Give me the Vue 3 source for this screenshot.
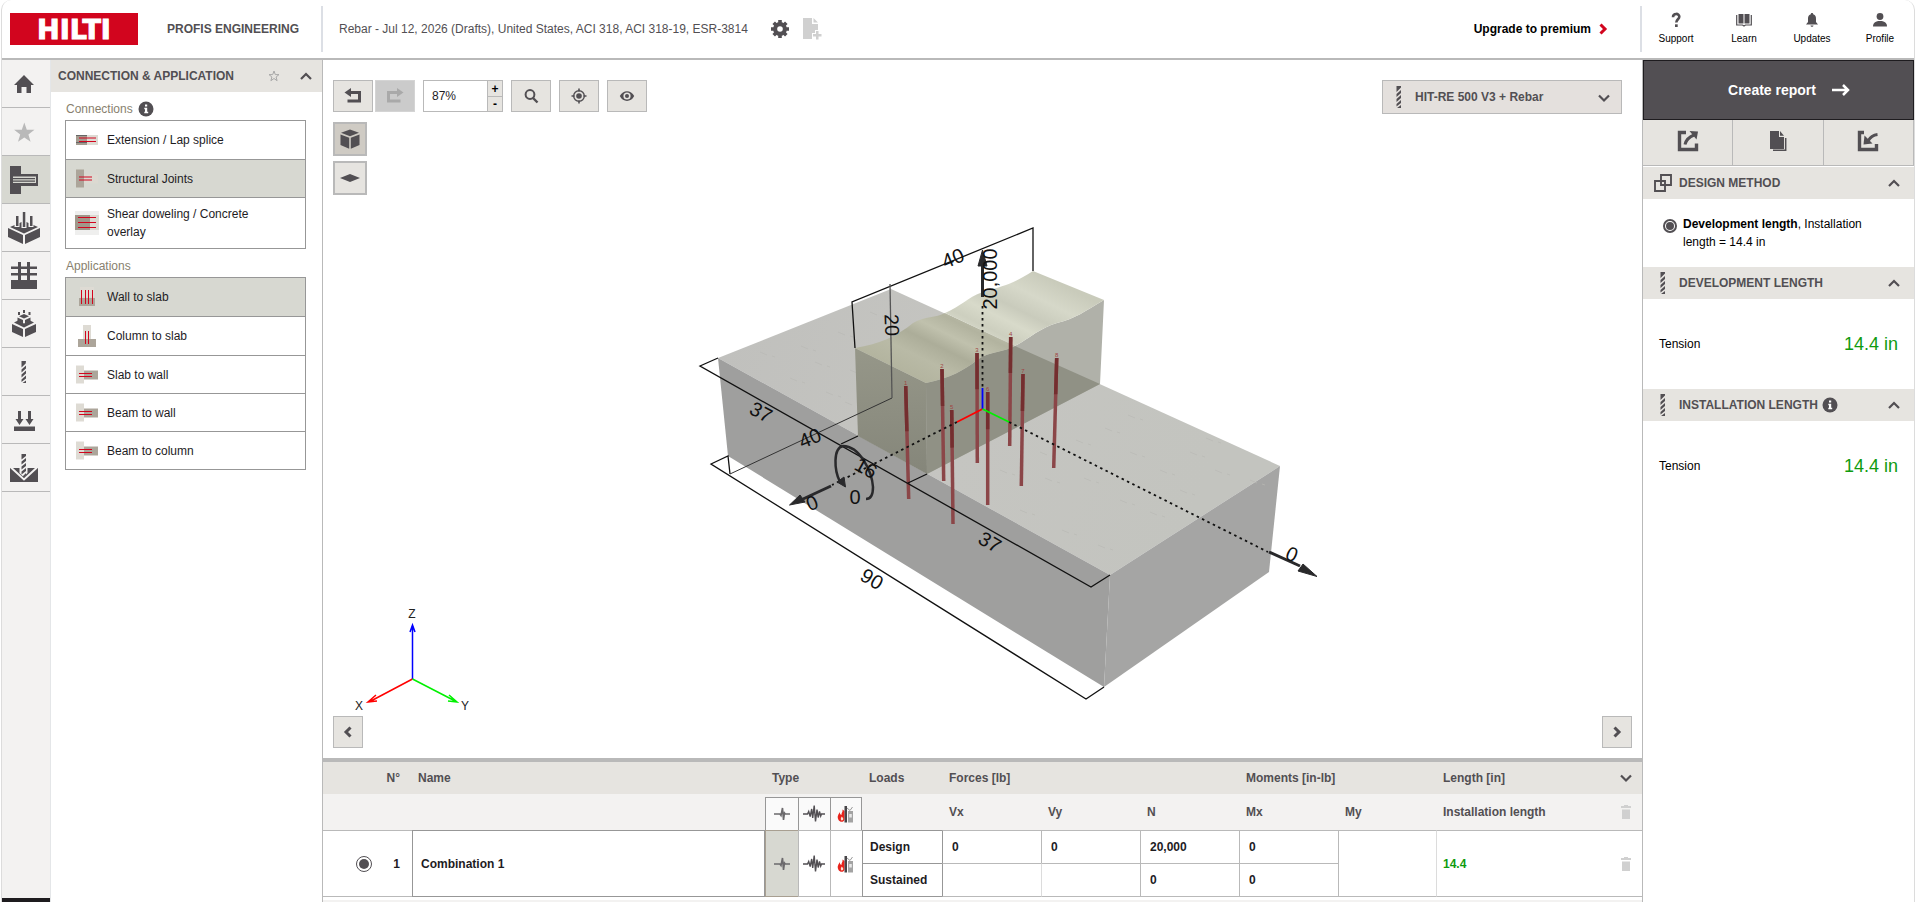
<script setup>
import { h, ref } from 'vue'

const glyphs = {
  home: '<path d="M22 15l10 10h-3v8h-4.500v-6h-5v6H15v-8h-3z"/>',
  star: '<path fill="#b9b9b9" d="M22.300 14.500l2.500 7.200h7.700l-6.100 4.700 2.200 7.400-6.300-4.400-6.300 4.400 2.200-7.400-6.100-4.700h7.700z"/>',
  joint: '<path d="M8 10h11v8h17v12H19v8H8z"/><path fill="#d7d8d1" d="M11 20.500h23v6.500H11z"/><path d="M11 22h22v1.200H11zM11 24.500h22v1.200H11z"/>',
  slab: '<path d="M6 24l15 7v9L6 33zM38 24l-15 7v9l15-7z"/><path d="M22 17l14 6-14 6.500L8 23z"/><g fill="#f3f2f1"><path d="M12.500 11h5v12h-5zM19.500 8h5v16h-5zM26.500 11h5v12h-5z"/></g><path d="M14 12h2.500v10H14zM20.800 8h2.500v15h-2.500zM28 12h2.500v10H28z"/>',
  mesh: '<path d="M9 28h26v9H9zM16 10h3v18h-3zM25 10h3v18h-3zM9 14.500h26v2.500H9zM9 21h26v2.500H9z"/>',
  stack: '<path d="M10 24l11 5v8l-11-5zM34 24l-11 5v8l11-5z"/><path d="M12 22.500l4-2 6 3 6-3 4 2-10 5z"/><path d="M15.500 17.500l5.500 2.500v3.500l-5.500-2.500zM28.500 17.500L23 20v3.500l5.500-2.500z"/><path d="M22 14l5 2.200-5 2.300-5-2.300z"/><path d="M16 12h2v3h-2zM21 10h2v3h-2zM26.500 12h2v3h-2z"/>',
  drill: '<path d="M19.500 13H24l-.3 2.500-4.200 4zM24 17.500v3l-4.500 4v-3zM24 22.500v3l-4.500 4v-3zM24 27.500v3L19.500 34v-2.500zM24 32.500V35h-3.500z"/>',
  loads: '<path d="M16 15h3v8h2.500l-4 6-4-6H16zM26 15h3v8h2.500l-4 6-4-6H26zM12 30.500h21V35H12z"/>',
  drillbox: '<path d="M8 24h28v14H8z"/><path d="M9 23.500l13 12 13-12" fill="none" stroke="#f3f2f1" stroke-width="2"/><path fill="#f3f2f1" d="M17.500 22h8v7l-4 4-4-4z"/><path d="M19.500 10H24v2l-4.500 3.500zM24 14v3l-4.500 3.500v-3zM24 19v3l-4.500 3.500v-3zM24 24v3l-4.500 3.500v-3zM24 29v2l-2 2.500-1.500-1z"/>'
}

const Icon = (props) =>
  h('svg', { viewBox: '0 0 48 47', width: 48, height: 47, fill: '#524f53', 'aria-hidden': 'true', innerHTML: glyphs[props.name] })
Icon.props = ['name']

const Bit = () =>
  h('svg', {
    viewBox: '0 0 6 22', width: 6, height: 22, fill: '#524f53', 'aria-hidden': 'true',
    innerHTML: '<path d="M.5 0H5v1.500L.5 6zM5 4v3L.5 11V8zM5 9v3L.5 16v-3zM5 14v3L.5 20.500V18zM5 19v3H1z"/>'
  })

const Chevron = (props) =>
  h('svg', {
    viewBox: '0 0 12 12', width: 12, height: 12, fill: 'none', stroke: props.color || '#524f53', 'stroke-width': props.thick || 2.2, 'aria-hidden': 'true',
    innerHTML: { up: '<path d="M1 9l5-5 5 5"/>', down: '<path d="M1 3.500l5 5 5-5"/>', left: '<path d="M8.500 1.500L4 6l4.500 4.500"/>', right: '<path d="M3.500 1.500L8 6l-4.500 4.500"/>' }[props.dir]
  })
Chevron.props = ['dir', 'color', 'thick']

const Info = () =>
  h('svg', {
    viewBox: '0 0 16 16', width: 16, height: 16, 'aria-hidden': 'true',
    innerHTML: '<circle cx="8" cy="8" r="7.500" fill="#524f53"/><path fill="#fff" d="M7 3.500h2.200v2H7zM6.300 6.800h2.900v4h1v1.400H6.300v-1.400H7V8.200h-.7z"/>'
  })

const Trash = () =>
  h('svg', { viewBox: '0 0 10 14', width: 10, height: 14, fill: '#d0d0d0', 'aria-hidden': 'true', innerHTML: '<path d="M0 1h3V0h4v1h3v2H0zM1 4.500h8V14H1z"/>' })

const waves = {
  single: '<path d="M3 12h6l1 1.500L11.500 6l1 12 1-7 .8 1H19" fill="none" stroke="#6b696c" stroke-width="1.600"/>',
  quake: '<path d="M0 12h4.500l1.200-2.500 1.500 5L8.700 7l1 9L11.200 3.500l1.300 16L14 7.500l1.200 8 1.300-6 1.200 4.500.8-2H22" fill="none" stroke="#524f53" stroke-width="1.400"/>',
  fire: '<path d="M7.500 7.500C8 10 6 11 6.500 13 5 12.500 4.800 11.500 5 10c-2.500 3-3 5.500-1.500 8C5 20.500 9 20.500 9.500 17.500V9z" fill="#e8231b"/><path d="M6.800 14.500c-1 1.200-1.500 3-.3 4 1.200 0 2-1 1.700-2.300z" fill="#fbe3d4"/><path d="M9.500 4H12v16.500H9.500z" fill="#484649"/><path d="M13 9h5v11.500h-5z" fill="#a3a3a3"/><path d="M14.200 12h2.600v3.500h-2.600z" fill="#e8e8e8"/><path d="M12 6l3 2.500L17.500 5" fill="none" stroke="#999"/>'
}
const Wave = (props) => h('svg', { viewBox: '0 0 22 24', width: 22, height: 24, 'aria-hidden': 'true', innerHTML: waves[props.kind] })
Wave.props = ['kind']

const thumbs = {
  lap: '<path fill="#dedbd4" d="M10 7h12v10H10z"/><path fill="#a49c90" d="M0 7h11v10H0z"/><path d="M0 7.500h11M0 14.500h11" stroke="#666"/><path d="M3 10h17M3 13.500h17" stroke="#d2051e"/>',
  joint: '<path fill="#dcd9d1" d="M8 7.500h14v9H8z"/><path fill="#aca59a" d="M0 2.500h8v18H0z"/><path d="M3 10h13M3 13h13" stroke="#d2051e"/>',
  shear: '<path fill="#efefee" d="M-1 0h24v24H-1z"/><path fill="#dcd9d1" d="M14 4h9v15h-9z"/><path fill="#a0978a" d="M-1 4h15v15H-1z"/><path d="M2 6.500h18M2 11.500h18M2 16.500h18" stroke="#d2051e"/>',
  wall: '<path fill="#dedbd4" d="M4 2h14v10H4z"/><path fill="#aca59a" d="M3 13h16v8H3z"/><path d="M5.500 5v14M9.500 5v14M12.500 5v14M16.500 5v14" stroke="#d2051e"/>',
  column: '<path fill="#dedbd4" d="M7 1h8v14H7z"/><path fill="#aca59a" d="M2 15h18v8H2z"/><path d="M9.500 7v13M12.500 7v13" stroke="#d2051e"/>',
  side: '<path fill="#dedbd4" d="M0 2.500h8v18H0z"/><path fill="#aca59a" d="M8 7.500h14v9H8z"/><path d="M3 10.500h13M3 13.500h13" stroke="#d2051e"/>'
}
const Thumb = (props) => h('svg', { viewBox: '0 0 22 24', width: 22, height: 24, overflow: 'visible', 'aria-hidden': 'true', innerHTML: thumbs[props.kind] })
Thumb.props = ['kind']

const nav = [
  ['home', 'Home'], ['star', 'Favourites'], ['joint', 'Connection'], ['slab', 'Base material'], ['mesh', 'Reinforcement'],
  ['stack', 'Geometry'], ['drill', 'Product'], ['loads', 'Loads'], ['drillbox', 'Installation']
]
const connections = [
  { kind: 'lap', label: 'Extension / Lap splice', tall: true },
  { kind: 'joint', label: 'Structural Joints' },
  { kind: 'shear', label: 'Shear doweling / Concrete overlay' }
]
const applications = [
  { kind: 'wall', label: 'Wall to slab', tall: true },
  { kind: 'column', label: 'Column to slab', tall: true },
  { kind: 'side', label: 'Slab to wall' },
  { kind: 'side', label: 'Beam to wall' },
  { kind: 'side', label: 'Beam to column' }
]
const connection = ref('Structural Joints')
const application = ref('Wall to slab')

const bars = [
  { n: 4, x1: 1010.7, y1: 337, x2: 1009.7, y2: 446, s: 0.33 },
  { n: 3, x1: 977, y1: 353, x2: 977.3, y2: 463, s: 0.33 },
  { n: 2, x1: 942, y1: 369, x2: 943.7, y2: 481, s: 0.33 },
  { n: 1, x1: 905.7, y1: 386, x2: 908.7, y2: 499, s: 0.4 },
  { n: 8, x1: 1056.7, y1: 358, x2: 1053.7, y2: 468, s: 0.33 },
  { n: 7, x1: 1023, y1: 374, x2: 1021.3, y2: 486, s: 0.33 },
  { n: 6, x1: 987.7, y1: 392, x2: 987.7, y2: 505, s: 0.33 },
  { n: 5, x1: 951.7, y1: 410, x2: 953, y2: 524, s: 0.33 }
]
const dims = [
  { t: '40', x: 953, y: 258, r: -22 }, { t: '20', x: 892, y: 325, r: 88 }, { t: '37', x: 761, y: 412, r: 28 },
  { t: '40', x: 810, y: 438, r: -22 }, { t: '16', x: 866, y: 468, r: 29 }, { t: '37', x: 990, y: 542, r: 30 },
  { t: '90', x: 872, y: 579, r: 31 }, { t: '20,000', x: 990, y: 279, r: -90 }, { t: '0', x: 812, y: 503, r: -22 },
  { t: '0', x: 855, y: 497, r: 0 }, { t: '0', x: 1292, y: 554, r: 24 }
]
const streaks = [
  [760, 352], [801, 346], [838, 332], [790, 378], [826, 392], [870, 312], [1040, 452], [1076, 440], [1105, 428], [1130, 452],
  [1160, 470], [1190, 452], [1206, 438], [1215, 470], [1250, 480], [1084, 478], [1120, 500], [1150, 512], [1020, 510], [1062, 530],
  [1098, 545], [1045, 478], [1180, 490], [1128, 415], [1000, 470], [850, 370], [815, 362], [845, 402]
]
</script>

<template>
  <div class="app">
    <header class="top">
      <a class="logo" href="#" aria-label="Hilti">
        <svg viewBox="0 0 128 32" width="128" height="32">
          <rect width="128" height="32" fill="#d2051e" />
          <text class="brand" x="64" y="26" text-anchor="middle">HILTI</text>
        </svg>
      </a>
      <strong class="product">PROFIS ENGINEERING</strong>
      <div class="project">
        <span>Rebar - Jul 12, 2026 (Drafts), United States, ACI 318, ACI 318-19, ESR-3814</span>
        <button class="bare gear" aria-label="Settings">
          <svg viewBox="0 0 20 20" width="20" height="20">
            <g fill="none" stroke="#524f53">
              <circle cx="10" cy="10" r="4.700" stroke-width="4.400" />
              <path d="M10 1v18M1 10h18M3.700 3.700l12.600 12.600M16.300 3.700L3.700 16.300" stroke-width="3.600" />
            </g>
            <circle cx="10" cy="10" r="2.800" fill="#fff" />
          </svg>
        </button>
        <button class="bare" aria-label="New file">
          <svg viewBox="0 0 20 22" width="20" height="22" fill="#d0d0d0">
            <path d="M1 0h9v6h6v6h-3v3h-3v6H1zM11.500 0L16 4.500h-4.500zM14 13h2.500v3h3v2.500h-3v3H14v-3h-3V16h3z" />
          </svg>
        </button>
      </div>
      <a class="upgrade" href="#">Upgrade to premium <Chevron dir="right" color="#d2051e" thick="3" /></a>
      <nav class="account" aria-label="Account">
        <button class="bare">
          <svg viewBox="0 0 16 16" width="16" height="16"><path d="M5 5.200C5 .8 11.500 1 11.300 4.800 11.200 7.300 8.300 7.300 8.300 10.500" fill="none" stroke="#524f53" stroke-width="2.600" /><path fill="#524f53" d="M7 12.300h2.700V15H7z" /></svg>
          Support
        </button>
        <button class="bare">
          <svg viewBox="0 0 16 16" width="16" height="16" fill="#524f53"><path d="M2.500 2H7.500v9.500h-5zM8.500 2h5v9.500h-5z" /><path d="M.7 3v10h5.800l1.500 1 1.500-1h5.800V3" fill="none" stroke="#524f53" stroke-width="1.200" /></svg>
          Learn
        </button>
        <button class="bare">
          <svg viewBox="0 0 16 16" width="16" height="16" fill="#524f53"><path d="M8 1c.8 0 1.200.5 1.200 1.200C11.500 2.800 12 4.500 12 7v3l2 2.500H2L4 10V7c0-2.500.5-4.200 2.800-4.800C6.800 1.500 7.200 1 8 1zM6.500 13.500h3c0 1.800-3 1.800-3 0z" /></svg>
          Updates
        </button>
        <button class="bare">
          <svg viewBox="0 0 16 16" width="16" height="16" fill="#524f53"><circle cx="8" cy="4.500" r="3.400" /><path d="M1 14.500C1 10.500 4 9 8 9s7 1.500 7 5.500z" /></svg>
          Profile
        </button>
      </nav>
    </header>

    <div class="body">
      <nav class="rail" aria-label="Sections">
        <button v-for="[name, label] in nav" :key="name" class="rail-btn" :class="{ active: name === 'joint' }" :aria-label="label">
          <Icon :name="name" />
        </button>
        <div class="rail-end"></div>
      </nav>

      <aside class="left">
        <div class="bar">
          <h2>CONNECTION &amp; APPLICATION</h2>
          <button class="bare fav" aria-label="Add to favourites">
            <svg viewBox="0 0 12 12" width="12" height="12"><path d="M6 1l1.300 3.600h3.700L8.100 7l1 3.700L6 8.500l-3.100 2.200 1-3.700L1 4.600h3.700z" fill="none" stroke="#a8a8a8" /></svg>
          </button>
          <button class="bare" aria-label="Collapse"><Chevron dir="up" /></button>
        </div>
        <section class="group">
          <h3>Connections <Info /></h3>
          <div class="choices">
            <button v-for="c in connections" :key="c.label" :class="{ on: connection === c.label, tall: c.tall }" @click="connection = c.label">
              <Thumb :kind="c.kind" /><span>{{ c.label }}</span>
            </button>
          </div>
          <h3>Applications</h3>
          <div class="choices">
            <button v-for="a in applications" :key="a.label" :class="{ on: application === a.label, tall: a.tall }" @click="application = a.label">
              <Thumb :kind="a.kind" /><span>{{ a.label }}</span>
            </button>
          </div>
        </section>
      </aside>

      <main class="center">
        <div class="viewer">
          <svg class="scene" viewBox="323 60 1319 698">
            <defs>
              <linearGradient id="ripple" gradientUnits="userSpaceOnUse" x1="855" y1="348" x2="921" y2="215">
                <stop offset="0" stop-color="#b3b49f" /><stop offset=".14" stop-color="#b9baa6" /><stop offset=".26" stop-color="#acad99" />
                <stop offset=".36" stop-color="#c0c1ad" /><stop offset=".46" stop-color="#b2b39f" /><stop offset=".56" stop-color="#c1c2af" />
                <stop offset=".7" stop-color="#b6b7a4" /><stop offset="1" stop-color="#bebfac" />
              </linearGradient>
              <linearGradient id="rippleLight" gradientUnits="userSpaceOnUse" x1="855" y1="348" x2="921" y2="215">
                <stop offset=".3" stop-color="#c9cbbb" /><stop offset=".42" stop-color="#dbddce" /><stop offset=".52" stop-color="#cdcfbf" />
                <stop offset=".62" stop-color="#d8daca" /><stop offset=".72" stop-color="#c9cbbc" /><stop offset=".85" stop-color="#d6d8c9" />
                <stop offset="1" stop-color="#c9cbbb" />
              </linearGradient>
              <linearGradient id="slabTop" gradientUnits="userSpaceOnUse" x1="720" y1="350" x2="1200" y2="500">
                <stop offset="0" stop-color="#c0c0bd" /><stop offset=".5" stop-color="#c5c5c1" /><stop offset="1" stop-color="#c3c4bf" />
              </linearGradient>
              <linearGradient id="endFace" x1="0" y1="0" x2="0" y2="1">
                <stop offset="0" stop-color="#969789" /><stop offset="1" stop-color="#85867a" />
              </linearGradient>
            </defs>

            <path d="M718 358L891 289 1280 466 1110 575z" fill="url(#slabTop)" />
            <path d="M718 358L1110 575 1104 687 728 456z" fill="#9f9f9e" />
            <path d="M1110 575L1280 466 1269 572 1104 687z" fill="#a5a5a4" />
            <g stroke="#b9b9b4" stroke-width=".7"><path v-for="[x, y] in streaks" :key="x + '-' + y" :d="`M${x} ${y}l7 3m5 1l3 1`" /></g>

            <path d="M926 383C950 378 965 370 977 360 990 351 1005 352 1015 346 1030 338 1040 328 1057 323 1075 319 1085 311 1104 300L1100 384 927 474z" fill="#b0b1a9" />
            <path d="M926 383C950 378 965 370 977 360 990 351 1005 352 1015 346L1100 384 927 474z" fill="#909185" />
            <path d="M855 348L926 383 927 474 858 436z" fill="url(#endFace)" />
            <path d="M855 348C880 344 897 336 913 323 925 316 936 318 945 313L1015 346C1005 352 990 351 977 360 965 370 950 378 926 383z" fill="url(#ripple)" />
            <path d="M945 313C962 306 966 298 983 292 1004 286 1013 284 1033 271L1104 300C1085 311 1075 319 1057 323 1040 328 1030 338 1015 346z" fill="url(#rippleLight)" />

            <g v-for="b in bars" :key="b.n" stroke-width="3.500">
              <path :d="`M${b.x1} ${b.y1}L${b.x2} ${b.y2}`" stroke="#8b4648" />
              <path :d="`M${b.x1} ${b.y1}L${b.x1 + (b.x2 - b.x1) * b.s} ${b.y1 + (b.y2 - b.y1) * b.s}`" stroke="#742e2f" />
              <text class="tag" :x="b.x1" :y="b.y1 - 1" text-anchor="middle">{{ b.n }}</text>
            </g>

            <g fill="none" stroke="#111" stroke-width="1.300">
              <path d="M855 348L852 302 1033 228V271" />
              <path d="M718 358L700 366 1091 587 1110 575" />
              <path d="M841 444L858 436M908 483L927 474" />
              <path d="M730 474L728 456 711 464 1086 699 1104 687" />
              <path d="M730 474L892 398" stroke="#333" stroke-width="1" />
              <path d="M892 398L890 284" stroke="#555" />
            </g>
            <g fill="none" stroke="#111" stroke-width="1.800" stroke-dasharray="2.500 3.500">
              <path d="M982.500 306V388M957 422L832 485M1009 422L1268 552" />
            </g>
            <g fill="none" stroke-width="1.800">
              <path d="M982.500 409V388" stroke="#0000ff" /><path d="M982.500 409L957 422" stroke="#ff0000" /><path d="M982.500 409L1009 422" stroke="#00f000" />
            </g>
            <g fill="#29292b" stroke="#29292b">
              <path d="M982.500 297V264" stroke-width="3" /><path d="M982.500 250L987 266H978z" />
              <path d="M831 486L803 499" stroke-width="3" /><path d="M789.500 505L800 495 805 502z" />
              <path d="M1269 552L1300 566" stroke-width="3" /><path d="M1317 576.500L1298 571 1303 564z" />
              <path d="M840 482C834 470 833 448 843 446 860 446 872 472 873 487 873 495 871 499 866 499" fill="none" stroke-width="2.500" />
              <path d="M845.500 487L837 482 844 477z" />
            </g>
            <text v-for="d in dims" :key="d.t + d.x" class="dim" :transform="`translate(${d.x} ${d.y}) rotate(${d.r})`" y="7" text-anchor="middle">{{ d.t }}</text>

            <g fill="none" stroke-width="1.500">
              <path d="M412.500 679V626M410 632l2.500-7 2.500 7" stroke="#0000ff" />
              <path d="M412.500 679L369 702M376 695l-8 7 9-1" stroke="#ff0000" />
              <path d="M412.500 679L457 702M449 695l8 7-9-1" stroke="#00f000" />
            </g>
            <g class="axis" text-anchor="middle"><text x="412" y="618">Z</text><text x="359" y="710">X</text><text x="465" y="710">Y</text></g>
          </svg>

          <div class="tools">
            <div class="tool-row">
              <button class="tool" aria-label="Undo"><svg viewBox="0 0 18 16" width="18" height="16"><path d="M6 4.500h9.500v8.500H3.500" fill="none" stroke="#524f53" stroke-width="3" /><path fill="#524f53" d="M7 0v9L.5 4.500z" /></svg></button>
              <button class="tool" disabled aria-label="Redo"><svg viewBox="0 0 18 16" width="18" height="16"><path d="M12 4.500H2.500v8.500h12" fill="none" stroke="#a9a9a9" stroke-width="3" /><path fill="#a9a9a9" d="M11 0v9l6.500-4.500z" /></svg></button>
              <div class="zoom">
                <input type="text" value="87%" aria-label="Zoom" />
                <button aria-label="Zoom in">+</button>
                <button aria-label="Zoom out">-</button>
              </div>
              <button class="tool" aria-label="Zoom to fit"><svg viewBox="0 0 16 16" width="16" height="16" fill="none" stroke="#524f53"><circle cx="7" cy="6.500" r="4.400" stroke-width="2" /><path d="M10 10l4.500 4.500" stroke-width="2.400" /></svg></button>
              <button class="tool" aria-label="Center view"><svg viewBox="0 0 16 16" width="16" height="16"><circle cx="8" cy="8" r="5.300" fill="none" stroke="#524f53" stroke-width="1.400" /><circle cx="8" cy="8" r="2.800" fill="#524f53" /><path d="M8 .5v3M8 12.500v3M.5 8h3M12.500 8h3" stroke="#524f53" stroke-width="1.600" /></svg></button>
              <button class="tool" aria-label="Visibility"><svg viewBox="0 0 16 16" width="16" height="16"><path fill="#524f53" d="M.8 8C4 1.500 12 1.500 15.200 8 12 14.500 4 14.500.8 8z" /><circle cx="8" cy="8" r="3.600" fill="#e6e4e0" /><circle cx="8" cy="8" r="2" fill="#524f53" /></svg></button>
            </div>
            <div class="pick">
              <Bit />
              <select aria-label="Product"><option>HIT-RE 500 V3 + Rebar</option></select>
              <Chevron dir="down" />
            </div>
          </div>
          <div class="views">
            <button class="view on" aria-label="3D view"><svg viewBox="0 0 20 20" width="20" height="20" fill="#524f53"><path d="M10 .5l9 3.300-9 3.400-9-3.400zM.5 5.500l8.700 3.200v11L.5 16zM19.500 5.500l-8.700 3.200v11l8.700-3.700z" /></svg></button>
            <button class="view" aria-label="Plan view"><svg viewBox="0 0 20 20" width="20" height="20" fill="#524f53"><path d="M0 10l10-4 10 4-10 4z" /></svg></button>
          </div>
          <div class="pages">
            <button class="page" aria-label="Previous"><Chevron dir="left" thick="3" /></button>
            <button class="page" aria-label="Next"><Chevron dir="right" thick="3" /></button>
          </div>
        </div>

        <section class="loads">
          <table>
            <colgroup>
              <col class="c-pick" /><col class="c-no" /><col /><col class="c-type1" /><col class="c-type" /><col class="c-type" />
              <col class="c-load" /><col v-for="i in 4" :key="i" class="c-val" /><col class="c-my" /><col class="c-len" /><col class="c-end" />
            </colgroup>
            <thead>
              <tr class="head">
                <th></th><th class="num">N°</th><th class="title">Name</th><th colspan="3">Type</th><th>Loads</th>
                <th colspan="3">Forces [lb]</th><th colspan="2">Moments [in-lb]</th><th>Length [in]</th>
                <th class="mid"><button class="bare" aria-label="Collapse table"><Chevron dir="down" /></button></th>
              </tr>
              <tr class="sub">
                <td></td><td></td><td></td>
                <td v-for="k in ['single', 'quake', 'fire']" :key="k" class="kind"><button :aria-label="k"><Wave :kind="k" /></button></td>
                <th></th><th>Vx</th><th>Vy</th><th>N</th><th>Mx</th><th>My</th><th>Installation length</th>
                <td class="mid"><button class="bare" aria-label="Delete all"><Trash /></button></td>
              </tr>
            </thead>
            <tbody>
              <tr>
                <td rowspan="2" class="end pick-cell"><input type="radio" name="combination" checked aria-label="Select combination 1" /></td>
                <td rowspan="2" class="end num">1</td>
                <td rowspan="2" class="end name"><input type="text" value="Combination 1" aria-label="Name" /></td>
                <td rowspan="2" class="end type on"><button aria-label="Static"><Wave kind="single" /></button></td>
                <td rowspan="2" class="end type"><button aria-label="Seismic"><Wave kind="quake" /></button></td>
                <td rowspan="2" class="end type"><button aria-label="Fire"><Wave kind="fire" /></button></td>
                <th class="load">Design</th>
                <td class="val dark"><input type="text" value="0" aria-label="Design Vx" /></td>
                <td class="val"><input type="text" value="0" aria-label="Design Vy" /></td>
                <td class="val"><input type="text" value="20,000" aria-label="Design N" /></td>
                <td class="val"><input type="text" value="0" aria-label="Design Mx" /></td>
                <td rowspan="2" class="end val"></td>
                <td rowspan="2" class="end len">14.4</td>
                <td rowspan="2" class="end mid"><button class="bare" aria-label="Delete combination 1"><Trash /></button></td>
              </tr>
              <tr>
                <th class="end load">Sustained</th>
                <td class="end val dark"></td>
                <td class="end val pale"></td>
                <td class="end val"><input type="text" value="0" aria-label="Sustained N" /></td>
                <td class="end val"><input type="text" value="0" aria-label="Sustained Mx" /></td>
              </tr>
            </tbody>
          </table>
          <div class="strip"></div>
        </section>
      </main>

      <aside class="right">
        <button class="report">Create report
          <svg viewBox="0 0 18 12" width="18" height="12"><path d="M0 6h16M11 1l5 5-5 5" fill="none" stroke="#fff" stroke-width="2.500" /></svg>
        </button>
        <div class="actions">
          <button aria-label="Export"><svg viewBox="0 0 22 22" width="22" height="22"><path d="M9 2.500H2.500v17h17v-6" fill="none" stroke="#524f53" stroke-width="3.400" /><path d="M8 14.500C9 10 12 7 17 5" fill="none" stroke="#524f53" stroke-width="3" /><path fill="#524f53" d="M12.500 1l8.500.5-1.500 8z" /></svg></button>
          <button aria-label="Duplicate"><svg viewBox="0 0 22 22" width="22" height="22"><path fill="#524f53" d="M3 1h9v6h5v12H3z M13 1l4 4.700h-4z" /><path d="M18.700 8v12.300H6" fill="none" stroke="#524f53" stroke-width="1.500" /></svg></button>
          <button aria-label="Import"><svg viewBox="0 0 22 22" width="22" height="22"><path d="M7 2.500H2.500v17h17V14" fill="none" stroke="#524f53" stroke-width="3.400" /><path d="M20.500 4.500C16 5 13 7.500 11 11" fill="none" stroke="#524f53" stroke-width="3" /><path fill="#524f53" d="M7.500 5.500l8 8-9 1z" /></svg></button>
        </div>

        <div class="bar">
          <svg class="lead" viewBox="0 0 18 18" width="18" height="18" fill="none" stroke="#524f53" stroke-width="1.900"><path d="M1 7h10v10H1zM7 1h10v10H7z" /></svg>
          <h2>DESIGN METHOD</h2>
          <button class="bare" aria-label="Collapse"><Chevron dir="up" /></button>
        </div>
        <label class="method">
          <input type="radio" name="method" checked />
          <span><b>Development length</b>, Installation length = 14.4 in</span>
        </label>

        <div class="bar">
          <span class="lead"><Bit /></span>
          <h2>DEVELOPMENT LENGTH</h2>
          <button class="bare" aria-label="Collapse"><Chevron dir="up" /></button>
        </div>
        <div class="result"><span>Tension</span><output>14.4 in</output></div>

        <div class="bar">
          <span class="lead"><Bit /></span>
          <h2>INSTALLATION LENGTH <Info /></h2>
          <button class="bare" aria-label="Collapse"><Chevron dir="up" /></button>
        </div>
        <div class="result"><span>Tension</span><output>14.4 in</output></div>
      </aside>
    </div>
  </div>
</template>

<style>
body { background: #fff; overflow: hidden; }
</style>

<style scoped>
* { box-sizing: border-box; }
.app {
  height: 100vh; margin: 0 2px 0 1px; display: flex; flex-direction: column; overflow: hidden;
  border: solid #dcdcdc; border-width: 0 1px; border-radius: 10px 10px 0 0;
  font: 12px/18px "Liberation Sans", Arial, sans-serif; color: #1e1c1f;
}
button, input, select { font: inherit; color: inherit; margin: 0; padding: 0; border-radius: 0; }
svg { display: block; flex: none; }
h2, h3 { margin: 0; font-size: 12px; }
.bare { border: 0; background: none; display: flex; align-items: center; justify-content: center; }

.top { height: 60px; flex: none; display: flex; align-items: center; border-bottom: 2px solid #b9b9b9; }
.logo { margin-left: 8px; }
.brand { font: bold 27px "DejaVu Sans", sans-serif; fill: #fff; stroke: #fff; stroke-width: 1; }
.product { margin-left: 29px; width: 154px; color: #524f53; }
.project { flex: 1; height: 46px; display: flex; align-items: center; border-left: 2px solid #dcdfe5; padding-left: 16px; color: #524f53; }
.gear { margin: 0 12px 0 22px; }
.upgrade { display: flex; align-items: center; gap: 6px; margin-right: 31px; color: #000; font-weight: bold; text-decoration: none; }
.account { display: flex; height: 46px; border-left: 2px solid #dcdfe5; }
.account button { width: 68px; flex-direction: column; gap: 4px; font-size: 10px; line-height: 14px; color: #000; }

.body { flex: 1; min-height: 0; display: flex; }
.rail { width: 49px; flex: none; display: flex; flex-direction: column; background: #f3f2f1; border-right: 1px solid #e4e6e8; }
.rail-btn { height: 48px; flex: none; border: 0; border-bottom: 1px solid #b9b9b9; background: none; overflow: hidden; }
.rail-btn.active { background: #d7d8d1; }
.rail-end { margin-top: auto; height: 4px; background: #1e1c1f; }

.left { width: 272px; flex: none; border-right: 1px solid #b9b9b9; }
.bar { height: 32px; display: flex; align-items: center; background: #e6e4e0; color: #524f53; padding: 0 10px 0 7px; }
.bar h2 { flex: 1; display: flex; align-items: center; gap: 4px; white-space: nowrap; }
.fav { margin-right: 20px; }
.group { padding: 8px 16px 0 14px; }
.group h3 { height: 18px; margin: 0 0 2px 1px; display: flex; align-items: center; gap: 5px; font-weight: normal; color: #887f6e; }
.choices { border: solid #979797; border-width: 0 1px 1px; }
.choices + h3 { margin-top: 8px; }
.choices button { width: 100%; min-height: 38px; display: flex; align-items: center; gap: 9px; padding: 7px 40px 7px 10px; border: 0; border-top: 1px solid #979797; background: #fff; text-align: left; }
.choices button.tall { min-height: 39px; }
.choices button.on { background: #d7d8d1; }
.choices svg { margin: -1px 0; }

.center { flex: 1; min-width: 0; display: flex; flex-direction: column; }
.viewer { position: relative; flex: 1; min-height: 0; display: flex; flex-direction: column; padding: 20px 10px 10px; }
.scene { position: absolute; inset: 0; width: 100%; height: 100%; }
.dim { font-size: 20px; fill: #111; }
.tag { font-size: 6px; fill: #a04444; }
.axis { font-size: 12px; fill: #222; }
.tools, .views, .pages { position: relative; display: flex; }
.tools { justify-content: space-between; padding-right: 10px; }
.tool-row { display: flex; }
.tool { width: 40px; height: 32px; margin-right: 8px; display: flex; align-items: center; justify-content: center; border: 1px solid #b9b9b9; background: #e6e4e0; }
.tool:first-child { margin-right: 2px; }
.tool:disabled { background: #cbcbcb; border-color: #d4d4d4; }
.zoom { width: 80px; height: 32px; margin-right: 8px; display: grid; grid-template: 1fr 1fr / 1fr 15px; border: 1px solid #b9b9b9; }
.zoom input { grid-row: span 2; min-width: 0; border: 0; padding-left: 8px; }
.zoom button { border: 0; border-left: 1px solid #b9b9b9; background: #e6e4e0; font-weight: bold; line-height: 12px; color: #000; }
.zoom button:last-child { border-top: 1px solid #b9b9b9; }
.pick { position: relative; width: 240px; height: 34px; border: 1px solid #b9b9b9; background: #e4e0dd; }
.pick select { width: 100%; height: 32px; padding-left: 32px; border: 0; background: none; appearance: none; font-weight: bold; color: #524f53; }
.pick svg { position: absolute; top: 5px; left: 13px; pointer-events: none; }
.pick svg:last-child { top: 11px; left: auto; right: 11px; }
.views { flex-direction: column; gap: 5px; margin-top: 8px; }
.view { width: 34px; height: 34px; display: flex; align-items: center; justify-content: center; border: 2px solid #b9b9b9; background: #e6e4e0; }
.view.on { background: #cfcbc4; }
.pages { margin-top: auto; justify-content: space-between; }
.page { width: 30px; height: 32px; display: flex; align-items: center; justify-content: center; border: 1px solid #b9b9b9; background: #e6e4e0; }

.loads { flex: none; border-top: 4px solid #b9b9b9; }
table { width: 100%; table-layout: fixed; border-collapse: separate; border-spacing: 0; font-weight: bold; }
th, td { padding: 0; text-align: left; vertical-align: middle; }
.c-pick { width: 58px; } .c-no { width: 31px; } .c-type1 { width: 33px; } .c-type { width: 32px; }
.c-load { width: 80px; } .c-val { width: 99px; } .c-my { width: 98px; } .c-len { width: 160px; } .c-end { width: 46px; }
thead { color: #524f53; white-space: nowrap; }
.head th { height: 32px; background: #e6e4e0; }
.head th, .sub th { padding-left: 7px; }
.head .title { padding-left: 6px; }
.sub th, .sub td { height: 36px; background: #f3f2f1; }
.head .num { padding: 0 12px 0 0; text-align: right; }
.sub .kind { vertical-align: bottom; }
.kind button { width: 100%; height: 33px; display: flex; align-items: center; justify-content: center; border: solid #979797; border-width: 1px 0 0 1px; background: #fafafa; }
.kind:nth-child(6) button { border-right-width: 1px; }
.mid { text-align: center; }
.mid .bare { margin: 0 auto 0 24px; width: 12px; }
.head .mid { padding: 0; }
tbody th, tbody td { height: 33px; border-top: 1px solid #b9b9b9; }
tbody .end { border-bottom: 1px solid #b9b9b9; }
tbody tr:last-child .end { height: 34px; }
tbody .num { text-align: right; padding-right: 12px; }
.pick-cell input { margin-left: 33px; }
.name input { width: 100%; height: 64px; border: 0; padding-left: 8px; display: block; background: none; }
tbody .name { border: 1px solid #979797; }
.type button { width: 100%; height: 64px; border: 0; background: none; display: flex; align-items: center; justify-content: center; }
tbody .type { border-left: 1px solid #b9b9b9; }
tbody .type.on { background: #d7d8d1; border-color: #a89f91; }
tbody .load { border-color: #979797; border-left: 1px solid #979797; padding-left: 7px; }
.val { border-left: 1px solid #b9b9b9; }
.val.dark { border-left-color: #979797; }
.val.pale { border-left-color: #dcdcdc; }
.val input { width: 100%; height: 32px; border: 0; padding-left: 9px; display: block; background: none; }
tbody .len { padding-left: 6px; border-left: 1px solid #dcdcdc; color: #0f9b0f; }
.strip { margin-top: 3px; height: 2px; background: #f3f2f1; }
input[type="radio"] { appearance: none; display: block; flex: none; width: 16px; height: 16px; border: 1px solid #524f53; border-radius: 50%; background: #524f53 content-box; padding: 2px; }

.right { width: 272px; flex: none; border-left: 1px solid #b9b9b9; }
.report { width: 100%; height: 60px; display: flex; align-items: center; justify-content: center; gap: 16px; padding-left: 21px; border: 1px solid #1e1c1f; background: #524f53; color: #fff; font-size: 14px; font-weight: bold; }
.actions { display: grid; grid-template-columns: repeat(3, 1fr); margin-bottom: 1px; border: solid #b9b9b9; border-width: 0 0 1px; }
.actions button { height: 45px; display: flex; align-items: center; justify-content: center; padding-bottom: 3px; border: 0; border-right: 1px solid #b9b9b9; background: #e6e4e0; }
.right .bar { padding: 0 14px 0 11px; }
.lead { width: 18px; margin-right: 7px; display: flex; justify-content: center; }
.method { height: 68px; display: flex; align-items: flex-start; gap: 6px; padding: 16px 40px 0 20px; color: #000; }
.method input { width: 14px; height: 14px; margin-top: 4px; border-width: 2px; padding: 1px; }
.result { height: 90px; display: flex; align-items: center; justify-content: space-between; padding: 0 16px; color: #000; }
.result output { font-size: 18px; color: #0f9b0f; }
</style>
